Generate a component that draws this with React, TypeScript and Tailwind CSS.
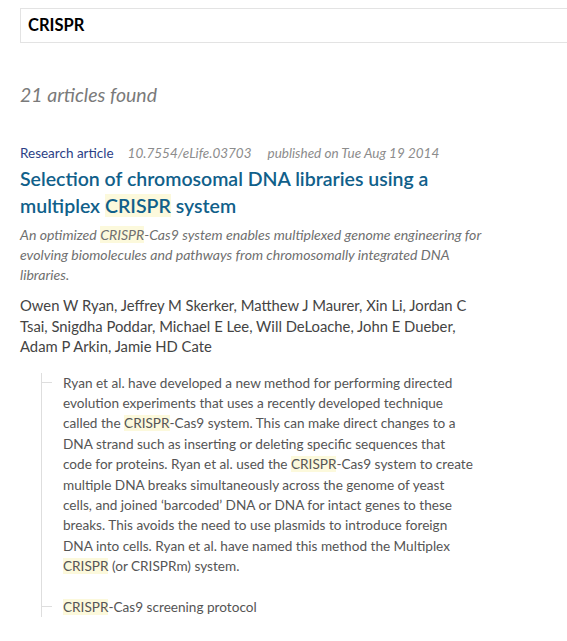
const font = "font-['Lato','Open_Sans',sans-serif]";

function Hl({ children }: { children: React.ReactNode }) {
  return <span className="bg-[#fcf9dc]">{children}</span>;
}

export default function App() {
  return (
    <div className={`${font} min-h-screen overflow-hidden bg-white pl-5`}>
      {/* search field */}
      <div className="mt-2 flex h-[35px] w-[600px] items-center border border-[#e3e3e3] px-[7px]">
        <span className="text-[16.5px] font-bold text-black">CRISPR</span>
      </div>

      <div className="mt-[39px] text-[19.5px] italic leading-[26px] text-[#7a7a7a]">
        21 articles found
      </div>

      <div className="w-[465px]">
        <div className="mt-[35px] flex items-baseline text-[13.5px] leading-[20px]">
          <span className="text-[#2c3f86]">Research article</span>
          <span className="ml-[14px] italic text-[#8c8c8c]">10.7554/eLife.03703</span>
          <span className="ml-[16px] italic text-[#8c8c8c]">published on Tue Aug 19 2014</span>
        </div>

        <h2 className="mt-[2px] text-[19.5px] font-semibold leading-[27px] text-[#10608a]">
          Selection of chromosomal DNA libraries using a multiplex <Hl>CRISPR</Hl> system
        </h2>

        <p className="mt-[6px] text-[14.1px] italic leading-[20px] text-[#707070]">
          An optimized <Hl>CRISPR</Hl>-Cas9 system enables multiplexed genome engineering for
          evolving biomolecules and pathways from chromosomally integrated DNA libraries.
        </p>

        <p className="mt-[10px] text-[14.8px] leading-[20.5px] text-[#444]">
          Owen W Ryan, Jeffrey M Skerker, Matthew J Maurer, Xin Li, Jordan C Tsai, Snigdha
          Poddar, Michael E Lee, Will DeLoache, John E Dueber, Adam P Arkin, Jamie HD Cate
        </p>

        <ul className="ml-[21px] mt-[16px] border-l border-[#dedede] text-[13.6px] leading-[20.4px] text-[#555]">
          <li className="flex">
            <span className="mt-[9px] h-px w-[10px] shrink-0 bg-[#dedede]" />
            <p className="ml-[11px] w-[412px]">
              Ryan et al. have developed a new method for performing directed evolution
              experiments that uses a recently developed technique called the{" "}
              <Hl>CRISPR</Hl>-Cas9 system. This can make direct changes to a DNA strand such
              as inserting or deleting specific sequences that code for proteins. Ryan et al.
              used the <Hl>CRISPR</Hl>-Cas9 system to create multiple DNA breaks simultaneously
              across the genome of yeast cells, and joined ‘barcoded’ DNA or DNA for intact
              genes to these breaks. This avoids the need to use plasmids to introduce foreign
              DNA into cells. Ryan et al. have named this method the Multiplex{" "}
              <Hl>CRISPR</Hl> (or CRISPRm) system.
            </p>
          </li>
          <li className="mt-[20px] flex">
            <span className="mt-[9px] h-px w-[10px] shrink-0 bg-[#dedede]" />
            <p className="ml-[11px]">
              <Hl>CRISPR</Hl>-Cas9 screening protocol
            </p>
          </li>
        </ul>
      </div>
    </div>
  );
}
